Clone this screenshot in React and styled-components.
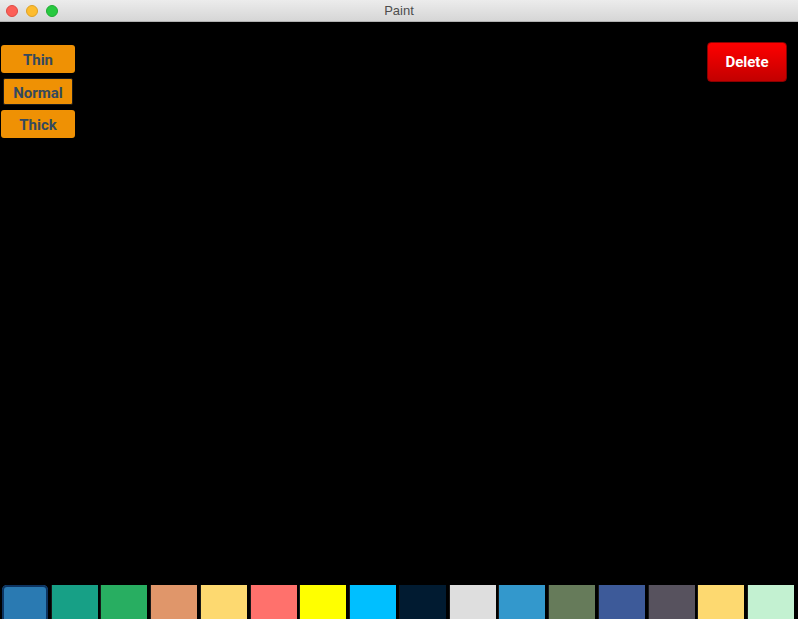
import styled, { createGlobalStyle } from "styled-components";

const GlobalStyle = createGlobalStyle`
  html, body {
    margin: 0;
    padding: 0;
    background: #000;
  }
  body {
    font-family: Roboto, "Liberation Sans", sans-serif;
  }
`;

//Palette colours, left to right.
const colors = [
  "#2a7ab2",
  "#17a086",
  "#28ae61",
  "#e0966a",
  "#fdd970",
  "#ff716c",
  "#ffff00",
  "#00bfff",
  "#011b31",
  "#dedede",
  "#3398cc",
  "#667b5a",
  "#3d5a99",
  "#57525e",
  "#fdd970",
  "#c3f1d1",
];

const widths = ["Thin", "Normal", "Thick"];

function App() {
  const selectedWidth = "Normal";
  const selectedColor = 0;

  return (
    <Window>
      <GlobalStyle />
      <TitleBar>
        <Lights>
          <Light color="#fc5f57" border="#de4a43" />
          <Light color="#fdbc2e" border="#dea123" />
          <Light color="#28c940" border="#1fab32" />
        </Lights>
        <Title>Paint</Title>
      </TitleBar>

      <Canvas>
        <Toolbar>
          <WidthColumn>
            {widths.map((w) => (
              <WidthButton key={w} selected={w === selectedWidth}>
                {w}
              </WidthButton>
            ))}
          </WidthColumn>
          <DeleteButton>Delete</DeleteButton>
        </Toolbar>

        <Palette>
          {colors.map((c, i) => (
            <Swatch key={i} color={c} selected={i === selectedColor} />
          ))}
        </Palette>
      </Canvas>
    </Window>
  );
}

export default App;

const Window = styled.div`
  display: flex;
  flex-direction: column;
  width: 798px;
  height: 619px;
  overflow: hidden;
  background: #000;
`;

const TitleBar = styled.div`
  position: relative;
  display: flex;
  align-items: center;
  justify-content: center;
  height: 21px;
  flex-shrink: 0;
  background: linear-gradient(#ececec, #d6d6d6);
  border-bottom: 1px solid #b1b1b1;
`;

const Lights = styled.div`
  position: absolute;
  left: 6px;
  top: 5px;
  display: flex;
  gap: 8px;
`;

const Light = styled.span`
  box-sizing: border-box;
  width: 12px;
  height: 12px;
  border-radius: 50%;
  background: ${(p) => p.color};
  border: 1px solid ${(p) => p.border};
`;

const Title = styled.span`
  font-family: "Liberation Sans", Arial, sans-serif;
  font-size: 13px;
  color: #4d4d4d;
`;

const Canvas = styled.div`
  flex: 1;
  display: flex;
  flex-direction: column;
  justify-content: space-between;
  background: #000;
`;

const Toolbar = styled.div`
  display: flex;
  justify-content: space-between;
  align-items: flex-start;
  padding: 20px 11px 0 1px;
`;

const WidthColumn = styled.div`
  display: flex;
  flex-direction: column;
  align-items: center;
  gap: 5px;
  padding-top: 3px;
  width: 74px;
`;

const WidthButton = styled.button`
  box-sizing: border-box;
  width: ${(p) => (p.selected ? "70px" : "74px")};
  height: ${(p) => (p.selected ? "27px" : "28px")};
  padding: 2px 0 0;
  background: #ef9104;
  border: ${(p) => (p.selected ? "1px solid #1c1c1c" : "none")};
  border-radius: ${(p) => (p.selected ? "2px" : "3px")};
  color: #34495e;
  font-family: Roboto, "Liberation Sans", sans-serif;
  font-weight: 700;
  font-size: 15px;
  cursor: pointer;
`;

const DeleteButton = styled.button`
  box-sizing: border-box;
  width: 80px;
  height: 40px;
  padding: 0;
  background: linear-gradient(#ff0000, #c20000);
  border: 1px solid #8a0000;
  border-radius: 4px;
  color: #fff;
  font-family: Roboto, "Liberation Sans", sans-serif;
  font-weight: 700;
  font-size: 15px;
  cursor: pointer;
`;

const Palette = styled.div`
  display: flex;
  height: 34px;
  overflow: hidden;
  padding: 0 4px 0 2px;
  gap: 3.73px;
`;

const Swatch = styled.div`
  flex: 1 1 0;
  min-width: 0;
  height: 40px;
  background: ${(p) => p.color};
  border-radius: ${(p) => (p.selected ? "5px" : "0")};
  box-shadow: ${(p) =>
    p.selected ? "inset 0 0 0 2px #0d3461" : "-1px 0 0 rgba(40,40,40,0.6)"};
  cursor: pointer;
`;
